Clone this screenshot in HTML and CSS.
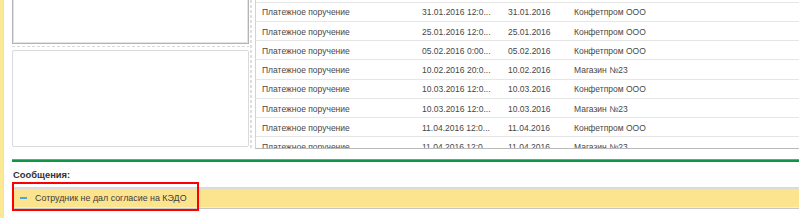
FILE: index.html
```html
<!DOCTYPE html>
<html lang="ru">
<head>
<meta charset="utf-8">
<title>Сообщения</title>
<link rel="stylesheet" href="styles.css">
</head>
<body>
<div class="page">
  <div class="strip"></div>
  <div class="main">
    <div class="top">
      <div class="left-col">
        <div class="panel1"></div>
        <div class="hdash"></div>
        <div class="panel2"></div>
      </div>
      <div class="vdash"></div>
      <div class="table">
        <div class="rows">
          <div class="row"><span>Платежное поручение</span><span>31.01.2016 12:0...</span><span>31.01.2016</span><span>Конфетпром ООО</span></div>
          <div class="row"><span>Платежное поручение</span><span>25.01.2016 12:0...</span><span>25.01.2016</span><span>Конфетпром ООО</span></div>
          <div class="row"><span>Платежное поручение</span><span>05.02.2016 0:00...</span><span>05.02.2016</span><span>Конфетпром ООО</span></div>
          <div class="row"><span>Платежное поручение</span><span>10.02.2016 20:0...</span><span>10.02.2016</span><span>Магазин №23</span></div>
          <div class="row"><span>Платежное поручение</span><span>10.03.2016 12:0...</span><span>10.03.2016</span><span>Конфетпром ООО</span></div>
          <div class="row"><span>Платежное поручение</span><span>10.03.2016 12:0...</span><span>10.03.2016</span><span>Магазин №23</span></div>
          <div class="row"><span>Платежное поручение</span><span>11.04.2016 12:0...</span><span>11.04.2016</span><span>Конфетпром ООО</span></div>
          <div class="row"><span>Платежное поручение</span><span>11.04.2016 12:0...</span><span>11.04.2016</span><span>Магазин №23</span></div>
        </div>
      </div>
    </div>
    <div class="green"></div>
    <div class="msg-title">Сообщения:</div>
    <div class="msg-area">
      <div class="bar">
        <span class="minus"></span>
        <span class="msg-text">Сотрудник не дал согласие на КЭДО</span>
      </div>
      <div class="highlight"></div>
    </div>
  </div>
</div>
</body>
</html>
```
FILE: styles.css
```css
html, body {
  margin: 0;
  padding: 0;
  background: #fff;
}
body {
  font-family: "Liberation Sans", Arial, sans-serif;
  width: 799px;
  height: 218px;
  overflow: hidden;
}
.page {
  display: flex;
  height: 218px;
  overflow: hidden;
}
.strip {
  width: 3px;
  flex: none;
  background: #fce994;
  border-right: 1px solid #e6e1c6;
}
.main {
  flex: 1;
  min-width: 0;
  padding-left: 8px;
}
.top {
  display: flex;
  height: 149px;
}
.left-col {
  width: 237px;
  flex: none;
  display: flex;
  flex-direction: column;
}
.panel1 {
  box-sizing: border-box;
  height: 44px;
  border: 1px solid #b3b3b3;
  border-top: none;
  box-shadow: inset 0 -1px 0 #e4e4e4, inset 1px 0 0 #e4e4e4, inset -1px 0 0 #e4e4e4;
}
.hdash {
  margin-top: 2px;
  height: 1px;
  background: repeating-linear-gradient(90deg, #d9d9d9 0 3px, transparent 3px 5px);
}
.panel2 {
  box-sizing: border-box;
  margin-top: 3px;
  height: 97px;
  border: 1px solid #dadada;
  border-radius: 2px;
}
.vdash {
  width: 2px;
  flex: none;
  margin-left: 1px;
  height: 149px;
  background: repeating-linear-gradient(180deg, #dedede 0 3px, transparent 3px 5px);
}
.table {
  flex: 1;
  min-width: 0;
  margin-left: 3px;
  box-sizing: border-box;
  height: 149px;
  border-left: 1px solid #d2d2d2;
  border-bottom: 1px solid #b9b9b9;
  overflow: hidden;
}
.rows {
  padding-top: 1.7px;
}
.row {
  display: grid;
  grid-template-columns: 160px 86px 66px 1fr;
  box-sizing: border-box;
  height: 19.25px;
  border-top: 1px solid #e6e6e6;
  align-items: center;
  padding-top: 1px;
  font-size: 8.5px;
  color: #474747;
}
.row span {
  padding-left: 6px;
  white-space: nowrap;
  overflow: hidden;
}
.green {
  margin-top: 10px;
  height: 3px;
  background: linear-gradient(#4db57a 0 1px, #0d9645 1px);
}
.msg-title {
  margin-top: 7px;
  height: 12px;
  line-height: 12px;
  font-size: 9.4px;
  font-weight: bold;
  color: #333;
  padding-left: 1px;
}
.msg-area {
  position: relative;
  margin-top: 6px;
}
.bar {
  display: flex;
  align-items: center;
  height: 18px;
  background: #fce48e;
  border-top: 2px solid #dbdbdb;
  border-bottom: 1px solid #f6efcf;
  box-shadow: 0 1px 0 #c6c6c6;
}
.minus {
  width: 7px;
  height: 2px;
  margin-left: 8px;
  background: #4ba6da;
  flex: none;
}
.msg-text {
  margin-left: 8px;
  font-size: 8.9px;
  color: #3d3d3d;
  white-space: nowrap;
}
.highlight {
  position: absolute;
  left: 0;
  top: -5px;
  width: 187px;
  height: 28.5px;
  box-sizing: border-box;
  border: 2px solid #f00;
}
```
